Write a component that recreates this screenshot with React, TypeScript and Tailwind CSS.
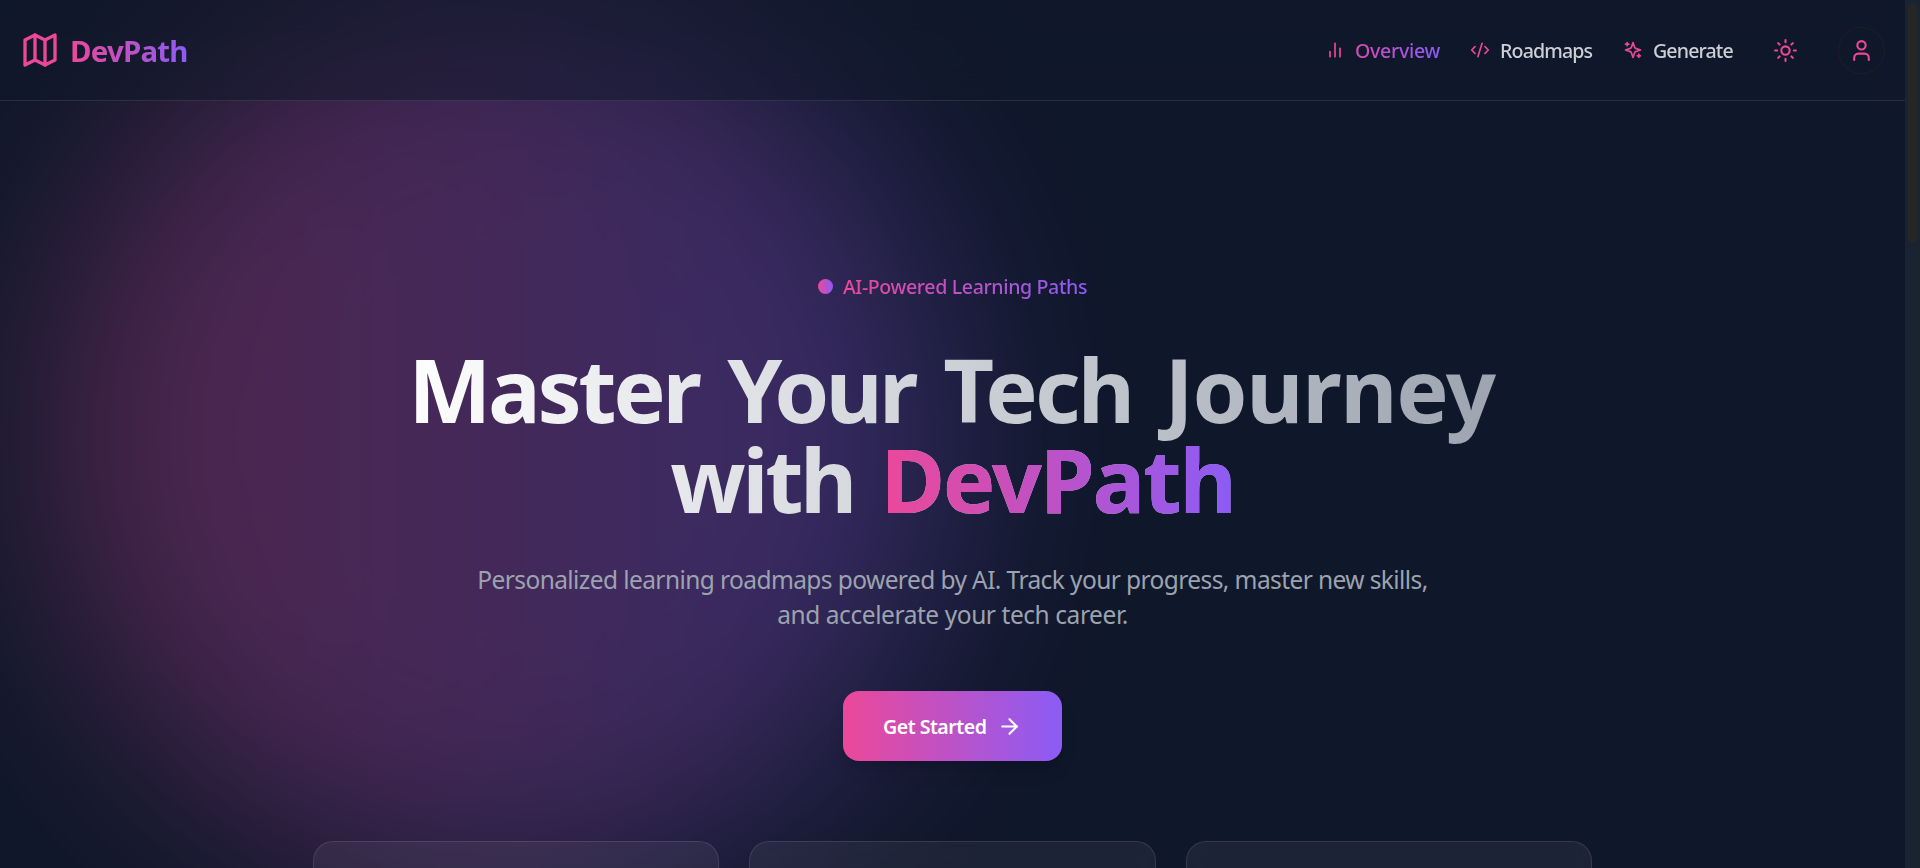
import type { ReactNode } from "react";

function Icon({ className, children }: { className: string; children: ReactNode }) {
  return (
    <svg
      viewBox="0 0 24 24"
      fill="none"
      stroke="currentColor"
      strokeWidth="2"
      strokeLinecap="round"
      strokeLinejoin="round"
      className={`shrink-0 ${className}`}
    >
      {children}
    </svg>
  );
}

function Header() {
  return (
    <header className="relative z-10 flex h-[101px] shrink-0 items-center justify-between border-b border-white/10 bg-[#0f172a]/50 px-5 backdrop-blur-lg">
      <a className="flex items-center gap-[10px]">
        <Icon className="size-10 text-[#ec4899]">
          <polygon points="3 6 9 3 15 6 21 3 21 18 15 21 9 18 3 21" />
          <line x1="9" x2="9" y1="3" y2="18" />
          <line x1="15" x2="15" y1="6" y2="21" />
        </Icon>
        <span className="bg-linear-to-r/srgb from-[#ec4899] to-[#8b5cf6] bg-clip-text pt-[2px] text-[29.4px] leading-[40px] font-bold tracking-[-0.75px] text-transparent">
          DevPath
        </span>
      </a>

      <nav className="flex items-center gap-[30px] text-[19.6px] leading-[30px] font-medium whitespace-nowrap text-[#cccfd4]">
        <a className="flex items-center gap-[10px] bg-linear-to-r/srgb from-[#ec4899] to-[#8b5cf6] bg-clip-text text-transparent">
          <Icon className="size-5 text-[#ec4899]">
            <path d="M18 20V10" />
            <path d="M12 20V4" />
            <path d="M6 20v-6" />
          </Icon>
          <span className="w-[85px] pt-[2px] tracking-[-0.3px]">Overview</span>
        </a>
        <a className="flex items-center gap-[10px]">
          <Icon className="size-5 text-[#ec4899]">
            <path d="m18 16 4-4-4-4" />
            <path d="m6 8-4 4 4 4" />
            <path d="m14.5 4-5 16" />
          </Icon>
          <span className="w-[93px] pt-[2px] tracking-[-0.86px]">Roadmaps</span>
        </a>
        <a className="flex items-center gap-[10px]">
          <Icon className="size-5 text-[#ec4899]">
            <path d="m12 3-1.912 5.813a2 2 0 0 1-1.275 1.275L3 12l5.813 1.912a2 2 0 0 1 1.275 1.275L12 21l1.912-5.813a2 2 0 0 1 1.275-1.275L21 12l-5.813-1.912a2 2 0 0 1-1.275-1.275L12 3Z" />
            <path d="M5 3v4" />
            <path d="M19 17v4" />
            <path d="M3 5h4" />
            <path d="M17 19h4" />
          </Icon>
          <span className="w-[80px] pt-[2px] tracking-[-0.88px]">Generate</span>
        </a>
        <button className="p-[10px] text-[#ec4899]">
          <Icon className="size-[25px]">
            <circle cx="12" cy="12" r="4" />
            <path d="M12 2v2" />
            <path d="M12 20v2" />
            <path d="m4.93 4.93 1.41 1.41" />
            <path d="m17.66 17.66 1.41 1.41" />
            <path d="M2 12h2" />
            <path d="M20 12h2" />
            <path d="m6.34 17.66-1.41 1.41" />
            <path d="m19.07 4.93-1.41 1.41" />
          </Icon>
        </button>
        <button className="rounded-full border border-[#1f1f24] p-[10px] text-[#ec4899]">
          <Icon className="size-[25px]">
            <path d="M19 21v-2a4 4 0 0 0-4-4H9a4 4 0 0 0-4 4v2" />
            <circle cx="12" cy="7" r="4" />
          </Icon>
        </button>
      </nav>
    </header>
  );
}

function Hero() {
  return (
    <section className="relative flex flex-col items-center pt-[170px]">
      <div className="flex items-center gap-[10px]">
        <span className="size-[15px] rounded-full bg-linear-to-r/srgb from-[#ec4899] to-[#8b5cf6]" />
        <span className="bg-linear-to-r/srgb from-[#ec4899] to-[#8b5cf6] bg-clip-text text-[19.6px] leading-[31px] font-medium tracking-[-0.385px] whitespace-nowrap text-transparent">
          AI-Powered Learning Paths
        </span>
      </div>

      <h1 className="mt-[42px] w-[1120px] bg-linear-to-r/srgb from-white to-[#9ca3af] bg-clip-text pb-5 text-center text-[88.2px] leading-[90px] font-bold whitespace-nowrap text-transparent">
        <span className="block pr-[2px]">
          <span className="tracking-[-3.4px]">Master</span>{" "}
          <span className="ml-[5.8px] tracking-[-3.8px]">Your</span>{" "}
          <span className="ml-[5.8px] tracking-[-2.8px]">Tech</span>{" "}
          <span className="ml-[9.3px] tracking-[-1.35px]">Journey</span>
        </span>
        <span className="block">
          <span className="tracking-[-3.5px]">with</span>{" "}
          <span className="ml-[3.7px] bg-linear-to-r/srgb from-[#ec4899] to-[#8b5cf6] bg-clip-text tracking-[-2.1px]">
            DevPath
          </span>
        </span>
      </h1>

      <p className="mt-[18px] text-center text-[24.5px] leading-[35px] whitespace-nowrap text-[#9ca3af]">
        <span className="block tracking-[-0.59px]">
          Personalized learning roadmaps powered by AI. Track your progress, master new skills,
        </span>
        <span className="block tracking-[-0.43px]">and accelerate your tech career.</span>
      </p>

      <button className="mt-[59px] flex h-[70px] w-[219px] items-center rounded-2xl bg-linear-to-r/srgb from-[#ec4899] to-[#8b5cf6] pl-10 text-left text-[19.6px] font-semibold whitespace-nowrap text-white shadow-[0_12px_19px_-4px_rgba(0,0,0,0.12),0_5px_8px_-5px_rgba(0,0,0,0.1)]">
        <span className="w-[114px] pt-px tracking-[-0.52px]">Get Started</span>
        <Icon className="size-[25px]">
          <path d="M5 12h14" />
          <path d="m12 5 7 7-7 7" />
        </Icon>
      </button>

      <div className="mt-20 grid w-[1280px] grid-cols-3 gap-[30px]">
        {["first", "second", "third"].map((id) => (
          <div
            key={id}
            className="h-[260px] rounded-[20px] border border-white/10 bg-white/[0.06] backdrop-blur-sm"
          />
        ))}
      </div>
    </section>
  );
}

export default function App() {
  return (
    <div className="flex h-[868px] w-[1920px] overflow-hidden bg-[#0f172a] font-['Noto_Sans','Open_Sans',sans-serif]">
      <div className="relative flex h-full w-[1905px] flex-col overflow-hidden">
        <div className="absolute top-[-14px] left-[50px] size-[900px] rounded-full bg-linear-to-r/srgb from-[#ec4899] to-[#8b5cf6] opacity-30 blur-[100px]" />
        <Header />
        <Hero />
      </div>
      <div className="flex w-[15px] justify-center bg-[#1a2431] pt-1">
        <div className="h-[238px] w-[9px] rounded-[3px] bg-[#262626]" />
      </div>
    </div>
  );
}
